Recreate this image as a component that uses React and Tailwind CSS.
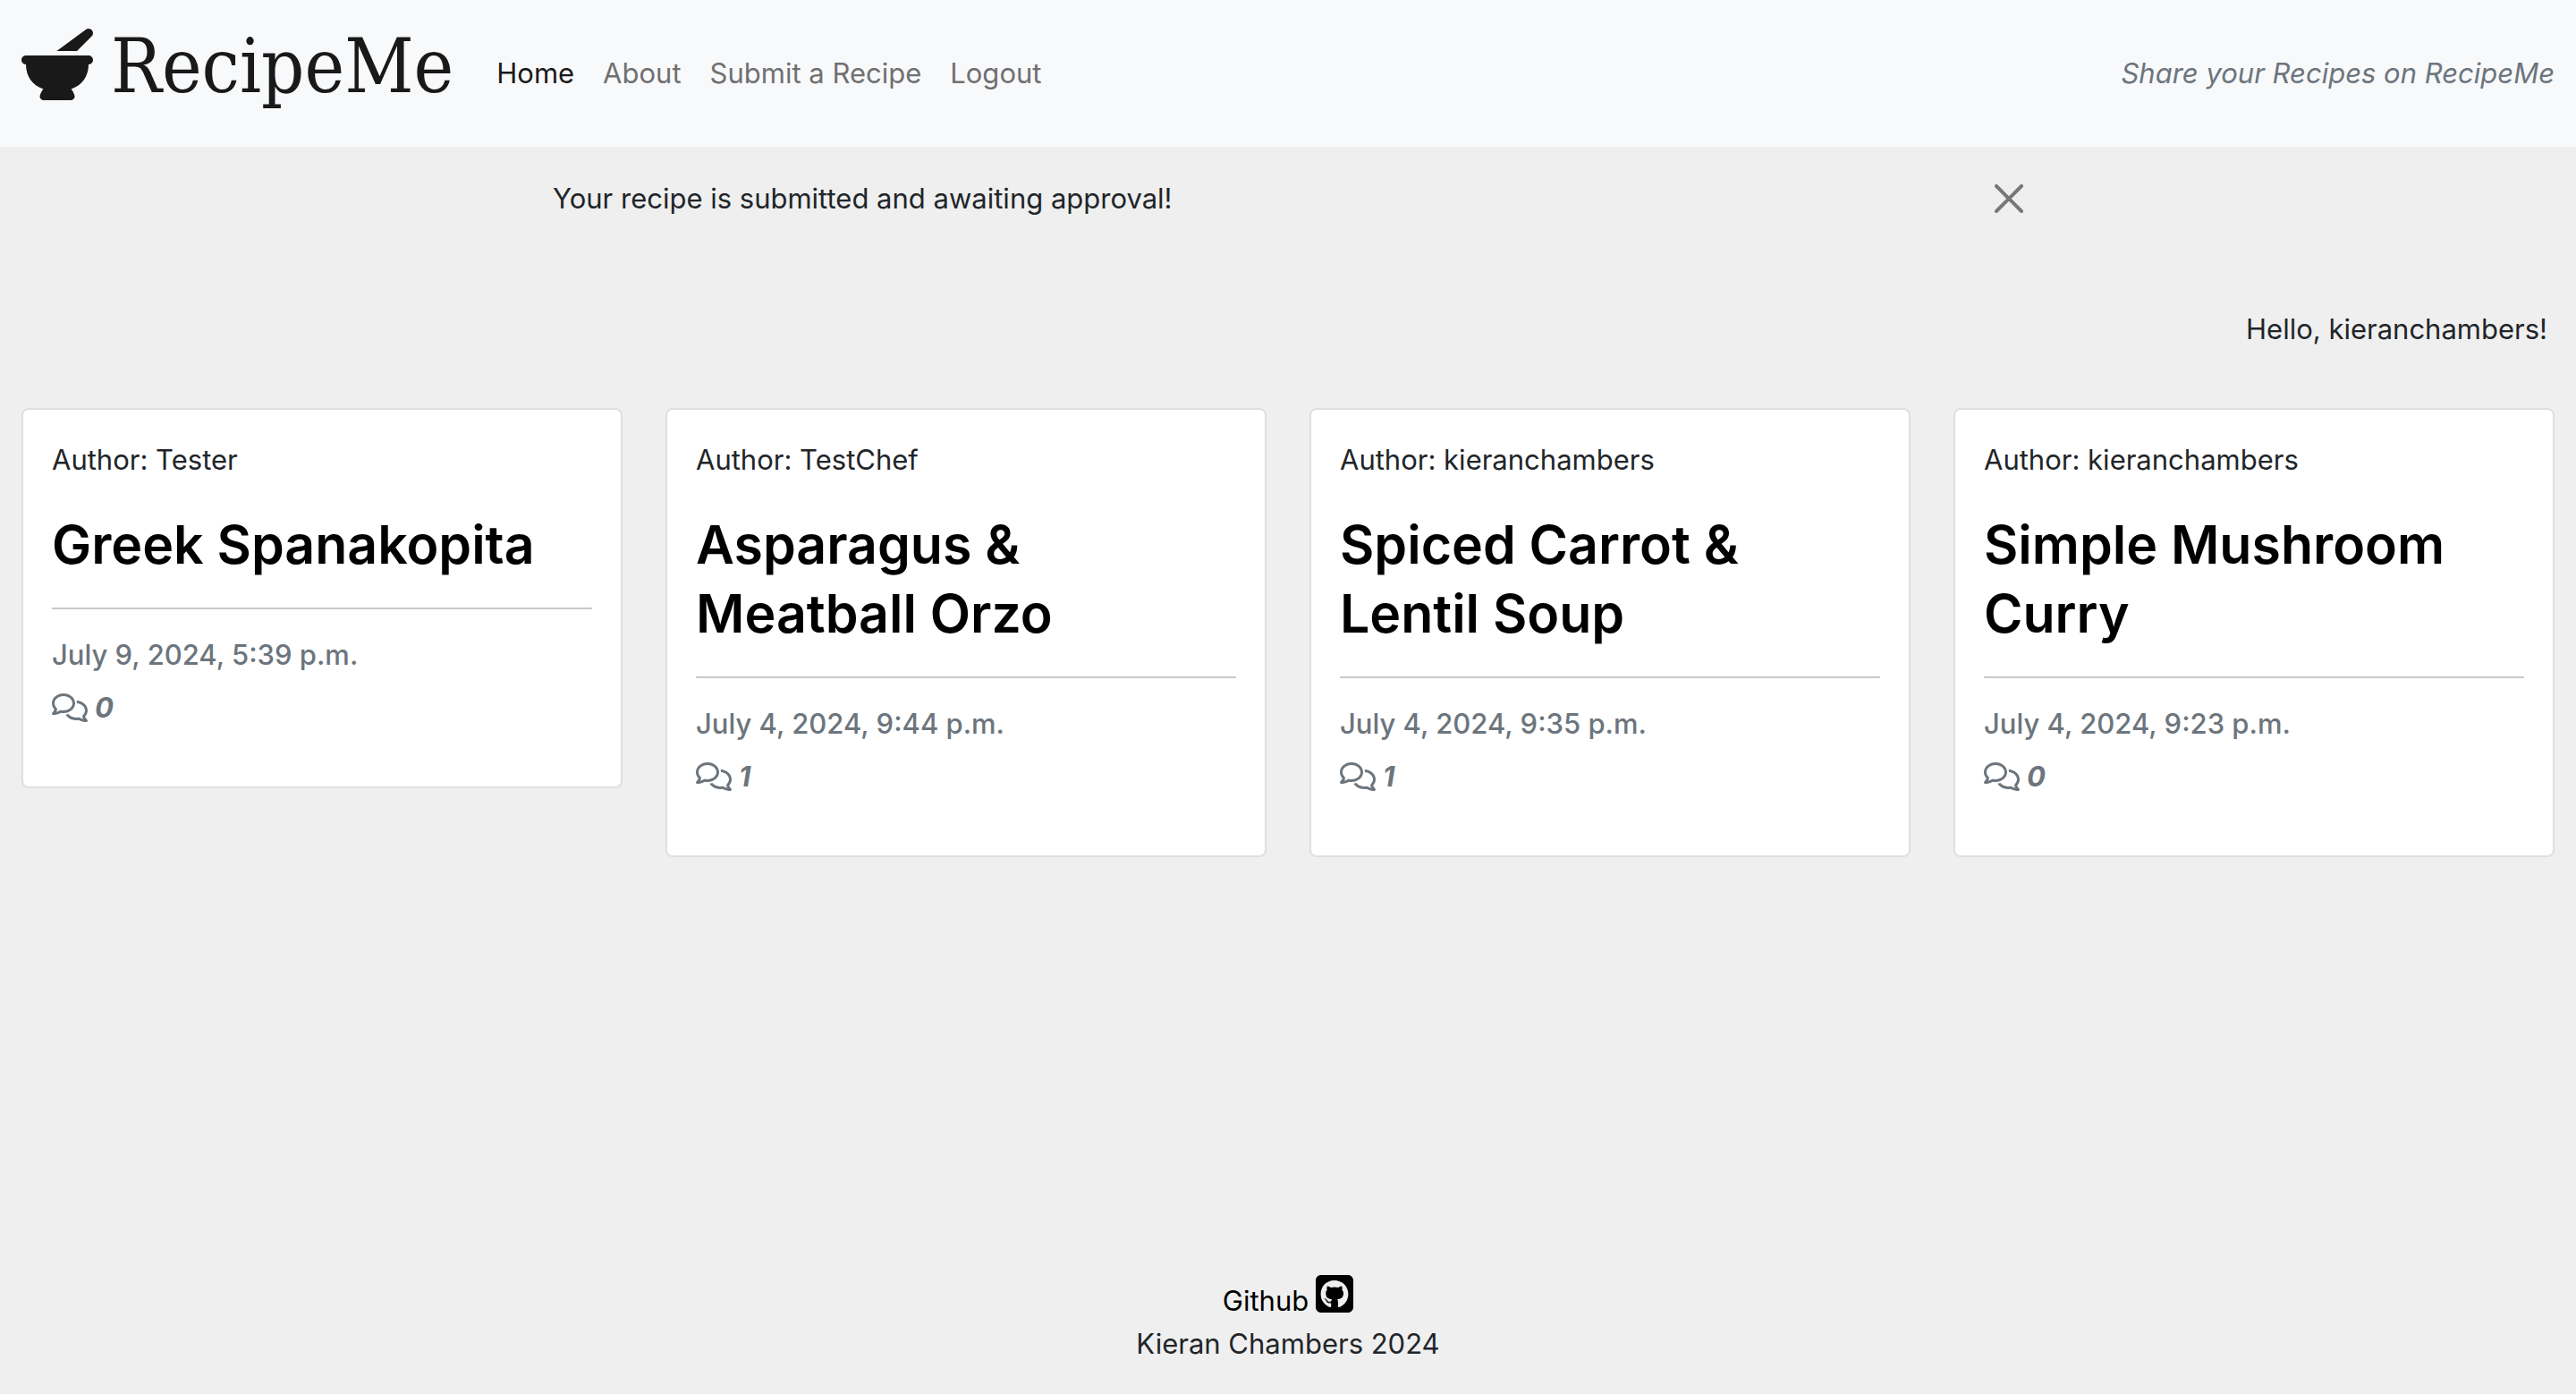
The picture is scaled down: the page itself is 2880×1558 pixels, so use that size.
import { useState } from "react";
import { FaMortarPestle, FaRegComments, FaSquareGithub } from "react-icons/fa6";

const links = ["Home", "About", "Submit a Recipe", "Logout"];

const recipes = [
  { author: "Tester", title: "Greek Spanakopita", date: "July 9, 2024, 5:39 p.m.", comments: 0 },
  { author: "TestChef", title: "Asparagus & Meatball Orzo", date: "July 4, 2024, 9:44 p.m.", comments: 1 },
  { author: "kieranchambers", title: "Spiced Carrot & Lentil Soup", date: "July 4, 2024, 9:35 p.m.", comments: 1 },
  { author: "kieranchambers", title: "Simple Mushroom Curry", date: "July 4, 2024, 9:23 p.m.", comments: 0 },
];

function Navbar() {
  return (
    <header className="flex flex-wrap items-center justify-between bg-[#f8f9fb] px-6 py-4">
      <div className="flex flex-wrap items-center gap-x-12">
        <a href="#home" className="flex items-start gap-5 text-[#191919]">
          <FaMortarPestle className="mt-4 size-20" aria-hidden="true" />
          <span className="font-['DejaVu_Serif_Condensed','DejaVu_Serif',serif] text-[84px] leading-[116px] pb-4">RecipeMe</span>
        </a>
        <nav>
          <ul className="flex flex-wrap gap-8">
            {links.map((link, i) => (
              <li key={link}>
                <a href="#" className={i === 0 ? "text-[#191919]" : "text-[#707070]"}>
                  {link}
                </a>
              </li>
            ))}
          </ul>
        </nav>
      </div>
      <p className="text-[#6c757d] italic">Share your Recipes on RecipeMe</p>
    </header>
  );
}

function Alert({ onClose }) {
  return (
    <div role="alert" className="mx-auto flex w-full max-w-[1712px] items-center justify-between px-[34px] py-[34px]">
      <p>Your recipe is submitted and awaiting approval!</p>
      <button type="button" aria-label="Close" onClick={onClose} className="text-[#777777]">
        <svg viewBox="0 0 16 16" className="size-8" fill="currentColor" aria-hidden="true">
          <path d="M.293.293a1 1 0 0 1 1.414 0L8 6.586 14.293.293a1 1 0 1 1 1.414 1.414L9.414 8l6.293 6.293a1 1 0 0 1-1.414 1.414L8 9.414l-6.293 6.293a1 1 0 0 1-1.414-1.414L6.586 8 .293 1.707a1 1 0 0 1 0-1.414z" />
        </svg>
      </button>
    </div>
  );
}

function RecipeCard({ recipe }) {
  return (
    <article className="rounded-lg border-2 border-[#dfdfdf] bg-white p-8">
      <p>Author: {recipe.author}</p>
      <a href="#" className="mt-8 block">
        <h2 className="text-[59px] leading-[77px] font-semibold text-black">{recipe.title}</h2>
      </a>
      <hr className="my-8 border-t-2 border-[#c7c8c9]" />
      <h3 className="mb-4 leading-[38px] font-medium text-[#6c757d]">{recipe.date}</h3>
      <p className="mb-8 flex items-center gap-2 font-bold text-[#6c757d] italic">
        <FaRegComments className="h-8 w-10" aria-label="Comments" />
        {recipe.comments}
      </p>
    </article>
  );
}

export default function App() {
  const [open, setOpen] = useState(true);
  return (
    <div className="flex min-h-screen flex-col bg-[#efefef] font-['Inter','Liberation_Sans',sans-serif] text-[31px] leading-[48px] text-[#212529]">
      <Navbar />
      {open && <Alert onClose={() => setOpen(false)} />}
      <main>
        <p className="mt-16 px-8 text-right">Hello, kieranchambers!</p>
        <section className="mt-16 grid grid-cols-1 items-start gap-12 px-6 md:grid-cols-2 xl:grid-cols-4">
          {recipes.map((recipe) => (
            <RecipeCard key={recipe.title} recipe={recipe} />
          ))}
        </section>
      </main>
      <footer className="mt-auto flex flex-col items-center pb-8">
        <a href="#" className="flex items-end gap-2 text-black">
          Github
          <FaSquareGithub className="mb-2 h-12 w-[42px]" aria-hidden="true" />
        </a>
        <p>Kieran Chambers 2024</p>
      </footer>
    </div>
  );
}
